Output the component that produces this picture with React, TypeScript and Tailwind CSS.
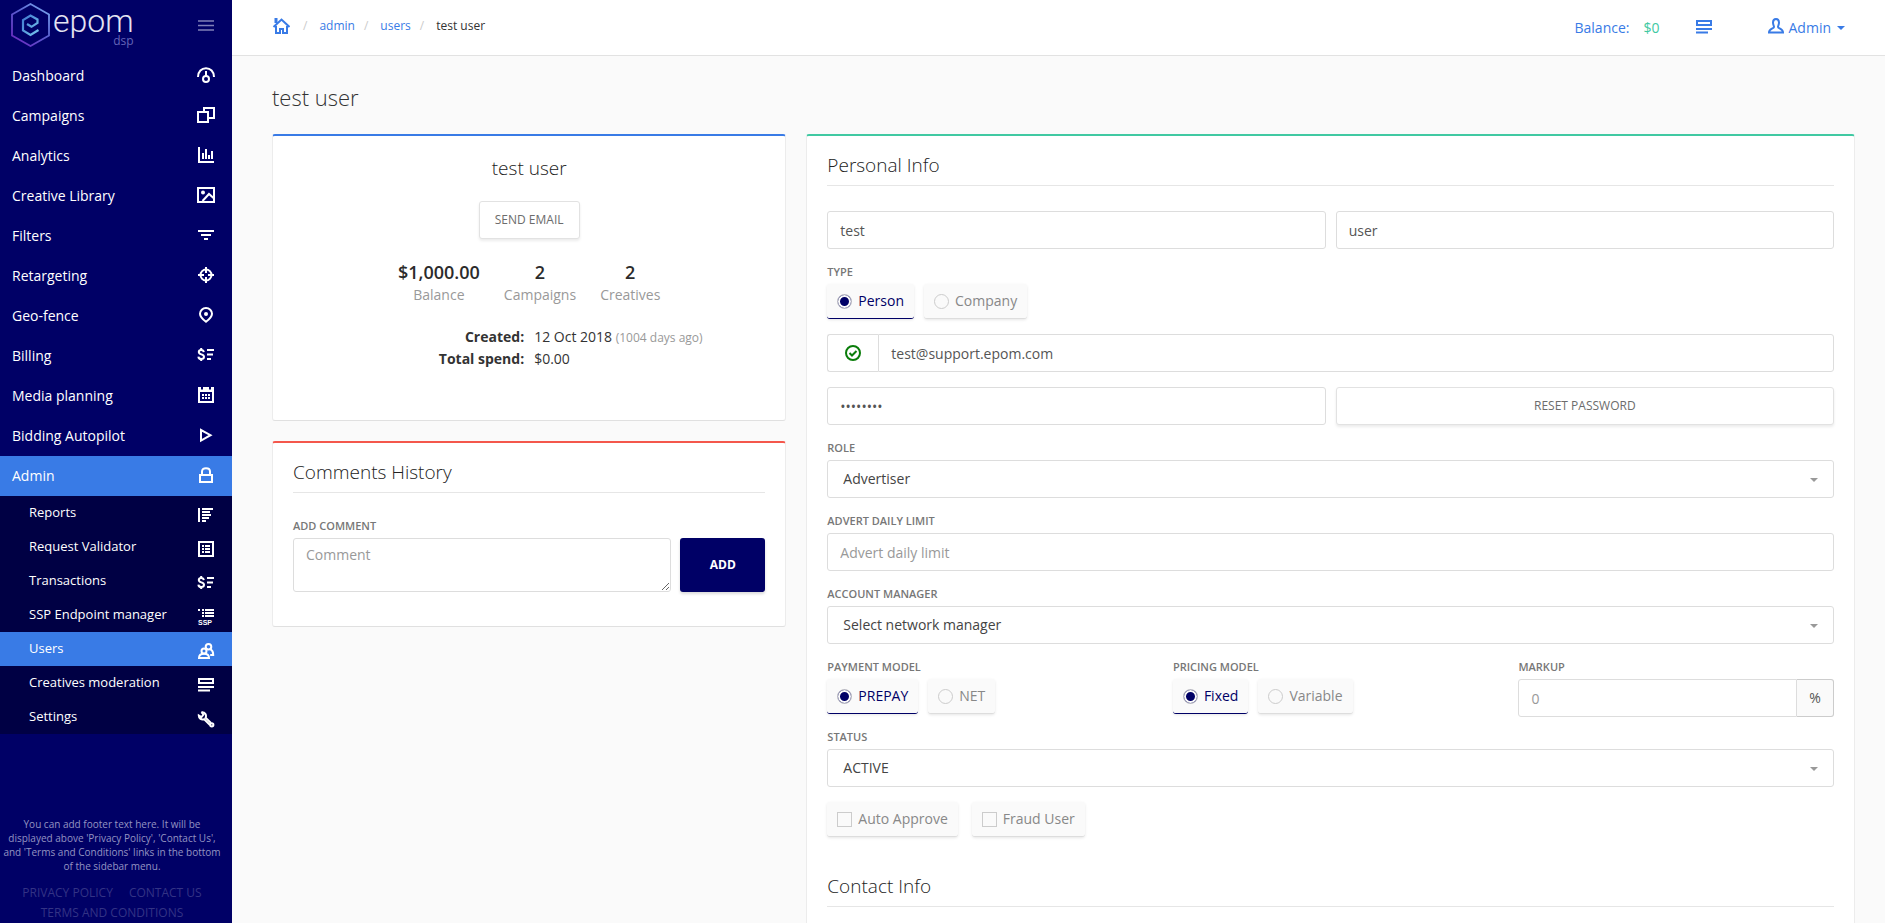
import React from "react";

type IconProps = { children: React.ReactNode; className?: string };

function Icon({ children, className = "" }: IconProps) {
  return (
    <svg
      viewBox="0 0 18 18"
      className={`size-[18px] shrink-0 ${className}`}
      fill="none"
      stroke="currentColor"
      strokeWidth="2"
      aria-hidden="true"
    >
      {children}
    </svg>
  );
}

const dollarList = (
  <>
    <path d="M6.8 5.2C6.6 3.8 5.6 3 4.2 3 2.600 3 1.800 3.900 1.800 5.100c0 3 5.200 1.600 5.200 4.700 0 1.400-1.100 2.200-2.800 2.200C2.500 12 1.500 11.100 1.400 9.600" />
    <path d="M4.200 .9V3M4.200 12v2" />
    <path d="M10 3h7M10 7.500h6M10 12h4" />
  </>
);

const cardList = (
  <>
    <rect x="2" y="2" width="14" height="4" />
    <path d="M1 10h16M1 13.500h12" />
  </>
);

const mainItems = [
  {
    label: "Dashboard",
    icon: (
      <>
        <path d="M1 10C1 4.500 4.700 1.200 9 1.200S17 4.500 17 10" />
        <circle cx="9" cy="12" r="3" />
        <path d="M9 4v5.500" />
      </>
    ),
  },
  {
    label: "Campaigns",
    icon: (
      <>
        <rect x="1" y="5" width="10" height="10" />
        <path d="M7 5V1h10v10h-6" />
      </>
    ),
  },
  {
    label: "Analytics",
    icon: (
      <>
        <path d="M2 0v15h15" />
        <path d="M6 12V6M9 12V2M12 12V8M15 12V4" />
      </>
    ),
  },
  {
    label: "Creative Library",
    icon: (
      <>
        <rect x="1" y="1" width="16" height="14" />
        <circle cx="6" cy="5.500" r="2" fill="currentColor" stroke="none" />
        <path d="M5.500 14 12 7l4.500 4" />
      </>
    ),
  },
  { label: "Filters", icon: <path d="M1 4h16M4 8h10M7 12h4" /> },
  {
    label: "Retargeting",
    icon: (
      <>
        <circle cx="9" cy="8" r="5.500" />
        <path d="M9 0v6M9 10v6M1 8h6M11 8h6" />
      </>
    ),
  },
  {
    label: "Geo-fence",
    icon: (
      <>
        <path d="M9 14.800C5.500 12.200 3 9.800 3 6.800A6 5.800 0 0 1 15 6.800C15 9.800 12.500 12.200 9 14.800Z" />
        <circle cx="9" cy="7" r="2" fill="currentColor" stroke="none" />
      </>
    ),
  },
  { label: "Billing", icon: dollarList },
  {
    label: "Media planning",
    icon: (
      <>
        <rect x="2" y="1" width="14" height="14" />
        <path d="M1 3h16" strokeWidth="4" />
        <path d="M5 0v2.500M13 0v2.500" stroke="#000066" />
        <path d="M5 8h8M5 11h8" strokeDasharray="2 1" />
      </>
    ),
  },
  { label: "Bidding Autopilot", icon: <path d="M4 3v10.500L13.500 8.200Z" /> },
];

const adminItems = [
  {
    label: "Reports",
    icon: (
      <>
        <path d="M2 1v14" />
        <path d="M5 2h11M5 5h8M5 8h9M5 11h7M5 14h4" />
      </>
    ),
  },
  {
    label: "Request Validator",
    icon: (
      <>
        <rect x="2" y="1" width="14" height="14" />
        <path d="M5 5h2M8 5h5M5 8h2M8 8h5M5 11h2M8 11h5" />
      </>
    ),
  },
  { label: "Transactions", icon: dollarList },
  {
    label: "SSP Endpoint manager",
    icon: (
      <>
        <path d="M1 1h2M5 1h2M8 1h9M5 4h2M8 4h9M5 7h2M8 7h9" />
        <text x="1" y="15.500" fontSize="7" fontWeight="700" fill="currentColor" stroke="none" fontFamily="Liberation Sans, sans-serif">
          SSP
        </text>
      </>
    ),
  },
  {
    label: "Users",
    active: true,
    icon: (
      <>
        <circle cx="11.500" cy="3.800" r="2.800" />
        <path d="M13.500 6.500c2 .8 2.700 3 2.700 5.500h-3" />
        <circle cx="7" cy="8" r="2.500" />
        <path d="M2 15c0-2.700 1.500-4.200 5-4.200s5 1.500 5 4.200Z" />
      </>
    ),
  },
  { label: "Creatives moderation", icon: cardList },
  {
    label: "Settings",
    icon: (
      <>
        <path d="M4.500 1.200 6.500 3.500 4.500 6 1.800 4.500C1.800 7.500 4.500 9.200 7.200 8.200L13 14" />
        <path d="M4.500 1.200C8 .8 9.800 3.800 8.600 6.800L14 12" />
        <circle cx="14.800" cy="13.800" r="1.600" />
      </>
    ),
  },
];

function Logo() {
  return (
    <a href="#home" className="flex items-center text-[#e4e4f2]" aria-label="epom dsp">
      <svg viewBox="0 0 40 44" className="h-11 w-10" fill="none" aria-hidden="true">
        <defs>
          <linearGradient id="hex" x1="1" y1="0" x2="0.200" y2="1">
            <stop offset="0" stopColor="#7db4f5" />
            <stop offset="0.500" stopColor="#5a5fd0" />
            <stop offset="1" stopColor="#6a2bc0" />
          </linearGradient>
          <linearGradient id="glyph" x1="0" y1="0" x2="1" y2="1">
            <stop offset="0" stopColor="#3f78cf" />
            <stop offset="1" stopColor="#78c8ee" />
          </linearGradient>
        </defs>
        <path d="M19.500 1 38 11.500v21L19.500 43 1 32.500v-21Z" stroke="url(#hex)" strokeWidth="1.800" />
        <path
          d="M16 21l4.500 2.800 6-4V16.500l-7-4L12 17v10.500l7.500 4.500L27.500 27"
          stroke="url(#glyph)"
          strokeWidth="2.200"
        />
      </svg>
      <span className="flex flex-col items-end pt-1 pl-0.5">
        <span className="h-7 font-[Roboto,sans-serif] text-[32px] leading-7 font-light">epom</span>
        <span className="h-3 text-xs leading-3 text-[#6464b8]">dsp</span>
      </span>
    </a>
  );
}

function Sidebar() {
  return (
    <aside className="sticky top-0 flex h-screen w-[232px] shrink-0 flex-col bg-[#000066] text-white">
      <div className="flex h-14 items-center justify-between pr-[17px] pb-1.5 pl-[11px]">
        <Logo />
        <button type="button" aria-label="Toggle menu" className="text-[#8080b8]">
          <Icon>
            <path d="M1 5h16M1 9.500h16M1 14h16" strokeWidth="1.500" />
          </Icon>
        </button>
      </div>
      <nav>
        <ul>
          {mainItems.map((item) => (
            <li key={item.label}>
              <a href="#" className="flex h-10 items-center justify-between pr-[17px] pl-3 text-sm">
                {item.label}
                <Icon>{item.icon}</Icon>
              </a>
            </li>
          ))}
          <li>
            <a href="#" className="flex h-10 items-center justify-between bg-[#397be6] pr-[17px] pl-3 text-sm">
              Admin
              <Icon>
                <rect x="3" y="8" width="12" height="7" />
                <path d="M5 8V4.500C5 2.500 6.500 1.200 9 1.200s4 1.300 4 3.300V8" />
              </Icon>
            </a>
            <ul className="bg-[#000044]">
              {adminItems.map((item) => (
                <li key={item.label}>
                  <a
                    href="#"
                    className={`flex h-[34px] items-center justify-between pr-[17px] pl-[29px] text-[13px] ${
                      item.active ? "bg-[#397be6]" : ""
                    }`}
                  >
                    {item.label}
                    <Icon className="mt-1.5">{item.icon}</Icon>
                  </a>
                </li>
              ))}
            </ul>
          </li>
        </ul>
      </nav>
      <footer className="mt-auto pr-2 text-center">
        <p className="px-0.5 text-[10px] leading-[14px] font-medium text-[#9494c2]">
          You can add footer text here. It will be displayed above 'Privacy Policy', 'Contact Us', and 'Terms and
          Conditions' links in the bottom of the sidebar menu.
        </p>
        <div className="mt-2.5 flex flex-wrap justify-center gap-x-4 px-3 text-xs leading-5 text-[#333385]">
          <a href="#privacy">PRIVACY POLICY</a>
          <a href="#contact">CONTACT US</a>
          <a href="#terms">TERMS AND CONDITIONS</a>
        </div>
      </footer>
    </aside>
  );
}

function Separator() {
  return <span className="pr-3 pl-[9px] text-[#cccccc]">/</span>;
}

function TopBar() {
  return (
    <header className="flex h-14 items-center justify-between border-b border-[#e2e2e2] bg-white pr-10 pl-10 text-[#397be6]">
      <nav aria-label="Breadcrumb" className="flex items-center pb-1 text-xs">
        <a href="#home" aria-label="Home" className="mr-1">
          <Icon>
            <path d="M4 9v7h4v-4h3v4h4V9" />
            <path d="M1.500 10 9.500 2.500 17.500 10" />
            <path d="M4 1v5" strokeWidth="3" />
          </Icon>
        </a>
        <Separator />
        <a href="#admin">admin</a>
        <Separator />
        <a href="#users">users</a>
        <Separator />
        <span className="text-[#333333]">test user</span>
      </nav>
      <div className="flex items-center text-sm">
        <span>Balance:</span>
        <span className="ml-3.5 text-[#40c9a2]">$0</span>
        <a href="#billing" aria-label="Billing list" className="ml-[35px]">
          <Icon>{cardList}</Icon>
        </a>
        <button type="button" className="ml-[54px] flex items-center gap-1">
          <Icon className="mb-1">
            <path d="M9 2C6.500 2 6 3.500 6 5.500S7 9 7 10c0 1.500-5 1.500-5 5.500h14C16 11.500 11 11.500 11 10c0-1 1-2.500 1-4.500S11.500 2 9 2Z" />
          </Icon>
          Admin
          <svg viewBox="0 0 8 4" className="ml-0.5 h-1 w-2" fill="currentColor" aria-hidden="true">
            <path d="M0 0h8L4 4Z" />
          </svg>
        </button>
      </div>
    </header>
  );
}

const cardClass = "rounded-[3px] border border-t-2 border-[#ececec] border-b-[#e0e0e0] bg-white";
const fieldClass =
  "block h-[38px] w-full min-w-0 rounded-[3px] border border-[#dddddd] bg-white px-3 text-sm text-[#555555] placeholder:text-[#999999]";
const labelClass = "mb-1 block text-[11px] leading-4 font-semibold text-[#777777]";
const buttonClass =
  "h-[38px] rounded-[3px] border border-[#e2e2e2] bg-white px-[15px] text-xs font-medium text-[#6c6c6c] shadow-[0_2px_3px_rgba(0,0,0,0.08)]";

function SectionTitle({ children }: { children: React.ReactNode }) {
  return (
    <h2 className="h-[38px] border-b border-[#e6e6e6] text-[19px] leading-[34px] font-light text-[#222222]">
      {children}
    </h2>
  );
}

function SelectField({ id, label, value }: { id: string; label: string; value: string }) {
  return (
    <div>
      <label htmlFor={id} className={labelClass}>
        {label}
      </label>
      <div className="relative">
        <select
          id={id}
          className="block h-[38px] w-full appearance-none rounded-[3px] border border-[#dddddd] bg-white px-[15px] pb-px text-sm text-[#444444]"
        >
          <option>{value}</option>
        </select>
        <svg
          viewBox="0 0 8 4"
          className="pointer-events-none absolute top-[18px] right-4 h-1 w-2 fill-[#999999]"
          aria-hidden="true"
        >
          <path d="M0 0h8L4 4Z" />
        </svg>
      </div>
    </div>
  );
}

type ChoiceProps = { type: "radio" | "checkbox"; name: string; label: string; checked?: boolean };

function Choice({ type, name, label, checked = false }: ChoiceProps) {
  return (
    <label
      className={`flex h-[35px] items-center gap-1.5 rounded-[3px] border-b bg-[#fafafa] px-2.5 text-sm shadow-[0_1px_3px_rgba(0,0,0,0.1)] ${
        checked ? "border-[#000066] text-[#000066]" : "border-[#dddddd] text-[#888888]"
      }`}
    >
      <input
        type={type}
        name={name}
        defaultChecked={checked}
        className={`size-[15px] appearance-none border border-[#cccccc] ${
          type === "radio"
            ? "rounded-full checked:bg-[#000066] checked:shadow-[inset_0_0_0_2px_#fafafa]"
            : "checked:bg-[#000066]"
        }`}
      />
      {label}
    </label>
  );
}

function RadioGroup({ name, label, options }: { name: string; label: string; options: string[] }) {
  return (
    <fieldset>
      <legend className={labelClass}>{label}</legend>
      <div className="flex gap-2.5">
        {options.map((option, index) => (
          <Choice key={option} type="radio" name={name} label={option} checked={index === 0} />
        ))}
      </div>
    </fieldset>
  );
}

const stats = [
  { value: "$1,000.00", label: "Balance" },
  { value: "2", label: "Campaigns" },
  { value: "2", label: "Creatives" },
];

function ProfileCard() {
  return (
    <section className={`${cardClass} flex flex-col items-center border-t-[#397be6] px-5 pt-[18px] pb-[50px]`}>
      <h2 className="text-[19px] leading-7 font-light text-[#222222]">test user</h2>
      <button type="button" className={`${buttonClass} mt-[19px]`}>
        SEND EMAIL
      </button>
      <dl className="mt-[21px] flex gap-6 text-center">
        {stats.map((stat) => (
          <div key={stat.label} className="flex flex-col-reverse">
            <dt className="text-sm leading-[22px] text-[#999999]">{stat.label}</dt>
            <dd className="text-lg leading-6 font-semibold text-[#2b2b2b]">{stat.value}</dd>
          </div>
        ))}
      </dl>
      <dl className="mt-5 grid w-full grid-cols-2 gap-x-2.5 text-sm leading-[22px] text-[#333333]">
        <dt className="text-right font-bold">Created:</dt>
        <dd>
          12 Oct 2018 <span className="text-xs text-[#999999]">(1004 days ago)</span>
        </dd>
        <dt className="text-right font-bold">Total spend:</dt>
        <dd>$0.00</dd>
      </dl>
    </section>
  );
}

function CommentsCard() {
  return (
    <section className={`${cardClass} border-t-[#f4574c] px-5 pt-3 pb-[34px]`}>
      <SectionTitle>Comments History</SectionTitle>
      <div className="mt-[25px]">
        <label htmlFor="comment" className={labelClass}>
          ADD COMMENT
        </label>
        <div className="flex gap-[9px]">
          <textarea
            id="comment"
            placeholder="Comment"
            className="h-[54px] min-w-0 flex-1 rounded-[3px] border border-[#dddddd] bg-white px-3 py-1.5 text-sm text-[#555555] placeholder:text-[#999999]"
          />
          <button
            type="button"
            className="w-[85px] rounded-[3px] bg-[#000066] text-xs font-bold text-white shadow-[0_2px_3px_rgba(0,0,0,0.15)]"
          >
            ADD
          </button>
        </div>
      </div>
    </section>
  );
}

function PersonalInfoCard() {
  return (
    <section className={`${cardClass} rounded-b-none border-b-0 border-t-[#40c9a2] px-5 pt-3`}>
      <SectionTitle>Personal Info</SectionTitle>
      <form className="mt-[25px] flex flex-col gap-[15px]">
        <div className="grid grid-cols-2 gap-2.5">
          <input type="text" aria-label="First name" defaultValue="test" className={fieldClass} />
          <input type="text" aria-label="Last name" defaultValue="user" className={fieldClass} />
        </div>
        <RadioGroup name="type" label="TYPE" options={["Person", "Company"]} />
        <div className="flex">
          <span className="flex w-[51px] shrink-0 items-center justify-center rounded-l-[3px] border border-r-0 border-[#dddddd] text-[#0a7d0a]">
            <Icon>
              <circle cx="9" cy="9" r="7" />
              <path d="m5.500 9 2.500 2.500L12.500 7" />
            </Icon>
          </span>
          <input
            type="email"
            aria-label="Email"
            defaultValue="test@support.epom.com"
            className={`${fieldClass} rounded-l-none`}
          />
        </div>
        <div className="grid grid-cols-2 gap-2.5">
          <input type="password" aria-label="Password" defaultValue="password" className={fieldClass} />
          <button type="button" className={buttonClass}>
            RESET PASSWORD
          </button>
        </div>
        <SelectField id="role" label="ROLE" value="Advertiser" />
        <div>
          <label htmlFor="limit" className={labelClass}>
            ADVERT DAILY LIMIT
          </label>
          <input id="limit" type="text" placeholder="Advert daily limit" className={fieldClass} />
        </div>
        <SelectField id="manager" label="ACCOUNT MANAGER" value="Select network manager" />
        <div className="-mb-[3px] grid grid-cols-3 gap-[30px]">
          <RadioGroup name="payment" label="PAYMENT MODEL" options={["PREPAY", "NET"]} />
          <RadioGroup name="pricing" label="PRICING MODEL" options={["Fixed", "Variable"]} />
          <div>
            <label htmlFor="markup" className={labelClass}>
              MARKUP
            </label>
            <div className="flex">
              <input id="markup" type="text" placeholder="0" className={`${fieldClass} rounded-r-none`} />
              <span className="flex w-[37px] shrink-0 items-center justify-center rounded-r-[3px] border border-l-0 border-[#cccccc] bg-[#fafafa] text-sm text-[#555555]">
                %
              </span>
            </div>
          </div>
        </div>
        <SelectField id="status" label="STATUS" value="ACTIVE" />
        <div className="flex gap-3.5">
          <Choice type="checkbox" name="autoApprove" label="Auto Approve" />
          <Choice type="checkbox" name="fraudUser" label="Fraud User" />
        </div>
      </form>
      <div className="mt-8 pb-4">
        <SectionTitle>Contact Info</SectionTitle>
      </div>
    </section>
  );
}

export default function App() {
  return (
    <div className="flex min-h-screen bg-[#fafafa] font-['Open_Sans','Noto_Sans',sans-serif]">
      <Sidebar />
      <div className="flex min-w-0 flex-1 flex-col">
        <TopBar />
        <main className="flex flex-1 flex-col pr-[30px] pl-10">
          <h1 className="flex h-[78px] items-center pt-1 text-[22px] font-light text-[#333333]">test user</h1>
          <div className="grid flex-1 grid-cols-12 gap-5">
            <div className="col-span-4 flex flex-col gap-5">
              <ProfileCard />
              <CommentsCard />
            </div>
            <div className="col-span-8 grid">
              <PersonalInfoCard />
            </div>
          </div>
        </main>
      </div>
    </div>
  );
}
